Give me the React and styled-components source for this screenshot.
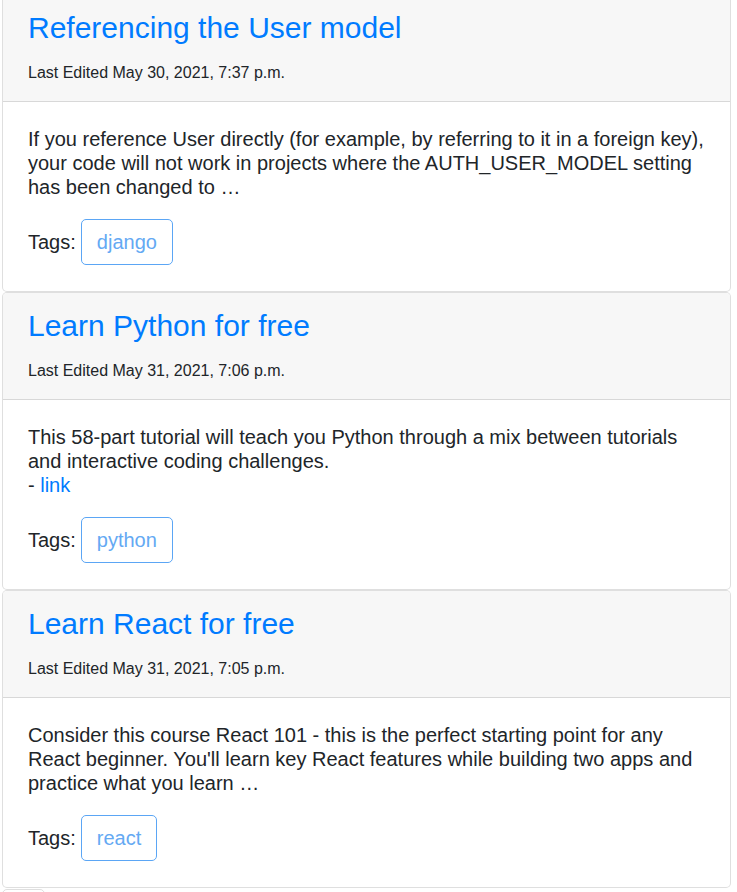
import React from "react";
import styled, { createGlobalStyle } from "styled-components";

const Global = createGlobalStyle`
  html, body { margin: 0; padding: 0; background: #fff; }
  body {
    font-family: "Liberation Sans", Arial, Helvetica, sans-serif;
    color: #212529;
    overflow: hidden;
  }
  * { box-sizing: border-box; }
`;

const Page = styled.main`
  margin-top: -6px;
  padding: 0 6px 0 2px;
  display: flex;
  flex-direction: column;
`;

const Card = styled.article`
  border: 1px solid rgba(0, 0, 0, 0.125);
  border-radius: 5px;
  background: #fff;
  overflow: hidden;
`;

const Header = styled.header`
  background: #f7f7f7;
  border-bottom: 1px solid rgba(0, 0, 0, 0.125);
  padding: 15px 25px 0;
`;

const Title = styled.a`
  display: block;
  font-size: 30px;
  line-height: 36px;
  color: #007bff;
  text-decoration: none;
  margin: 0 0 15px;
`;

const Meta = styled.p`
  font-size: 16px;
  line-height: 24px;
  margin: 0 0 16px;
  color: #212529;
`;

const Body = styled.div`
  padding: 25px 25px 26px;
  font-size: 20px;
  line-height: 24px;
`;

const Summary = styled.p`
  margin: 0 0 20px;
`;

const Link = styled.a`
  color: #007bff;
  text-decoration: none;
`;

const Tags = styled.div`
  display: flex;
  align-items: baseline;
  gap: 5px;
`;

const Tag = styled.span`
  display: inline-block;
  padding: 11px 15px;
  border: 1px solid #5ba6f5;
  border-radius: 5px;
  color: #64a9f3;
  font-size: 20px;
  line-height: 22px;
`;

const PageItem = styled.div`
  width: 43px;
  height: 40px;
  border: 1px solid rgba(0, 0, 0, 0.125);
  border-radius: 5px 5px 0 0;
  margin-top: 1px;
`;

const posts = [
  {
    title: "Referencing the User model",
    date: "May 30, 2021, 7:37 p.m.",
    body: "If you reference User directly (for example, by referring to it in a foreign key), your code will not work in projects where the AUTH_USER_MODEL setting has been changed to …",
    tag: "django",
  },
  {
    title: "Learn Python for free",
    date: "May 31, 2021, 7:06 p.m.",
    body: "This 58-part tutorial will teach you Python through a mix between tutorials and interactive coding challenges.",
    link: true,
    tag: "python",
  },
  {
    title: "Learn React for free",
    date: "May 31, 2021, 7:05 p.m.",
    body: "Consider this course React 101 - this is the perfect starting point for any React beginner. You'll learn key React features while building two apps and practice what you learn …",
    tag: "react",
  },
];

export default function App() {
  return (
    <>
      <Global />
      <Page>
        {posts.map((p) => (
          <Card key={p.title}>
            <Header>
              <Title href="#">{p.title}</Title>
              <Meta>Last Edited {p.date}</Meta>
            </Header>
            <Body>
              <Summary>
                {p.body}
                {p.link && (
                  <>
                    <br />- <Link href="#">link</Link>
                  </>
                )}
              </Summary>
              <Tags>
                <span>Tags:</span>
                <Tag>{p.tag}</Tag>
              </Tags>
            </Body>
          </Card>
        ))}
        <PageItem />
      </Page>
    </>
  );
}
